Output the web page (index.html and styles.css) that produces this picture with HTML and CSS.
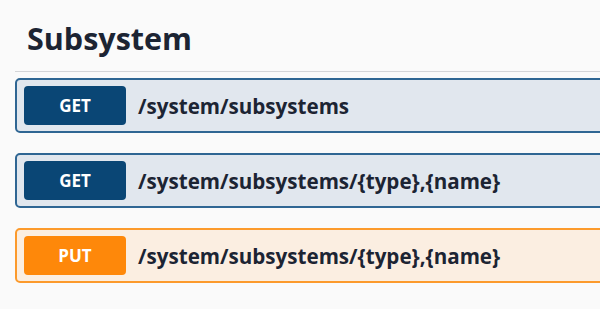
FILE: index.html
```html
<!DOCTYPE html>
<html>
<head>
<meta charset="utf-8">
<link rel="stylesheet" href="styles.css">
</head>
<body>
<div class="section">
  <h2 class="tag">Subsystem</h2>
  <div class="ops">
    <div class="op op-get">
      <span class="method">GET</span>
      <span class="path">/system/subsystems</span>
    </div>
    <div class="op op-get">
      <span class="method">GET</span>
      <span class="path">/system/subsystems/{type},{name}</span>
    </div>
    <div class="op op-put">
      <span class="method">PUT</span>
      <span class="path">/system/subsystems/{type},{name}</span>
    </div>
  </div>
</div>
</body>
</html>
```

FILE: styles.css
```css
html, body {
  margin: 0;
  padding: 0;
  background: #fafafa;
  overflow: hidden;
}
.section {
  width: 640px;
  padding-left: 15px;
  font-family: "Open Sans", "Noto Sans", sans-serif;
}
.tag {
  margin: 0;
  padding: 17px 0 12px 12px;
  font-size: 30.5px;
  line-height: 42px;
  font-weight: 700;
  color: #1c2433;
  border-bottom: 1px solid #d4d5d8;
}
.ops {
  padding-top: 6px;
  display: flex;
  flex-direction: column;
  gap: 20px;
}
.op {
  display: flex;
  align-items: center;
  height: 55px;
  box-sizing: border-box;
  border: 2px solid;
  border-radius: 5px;
  padding: 0 0 0 7px;
}
.op-get {
  border-color: #2f6693;
  background: #e1e7ee;
}
.op-put {
  border-color: #fc9a2c;
  background: #fbeee1;
}
.method {
  width: 102px;
  height: 39px;
  border-radius: 4px;
  display: flex;
  align-items: center;
  justify-content: center;
  color: #fff;
  font-size: 17px;
  font-weight: 700;
}
.op-get .method { background: #0a4675; }
.op-put .method { background: #fe880a; }
.path {
  margin-left: 12px;
  font-size: 20.6px;
  font-weight: 700;
  color: #1c2433;
}
```
